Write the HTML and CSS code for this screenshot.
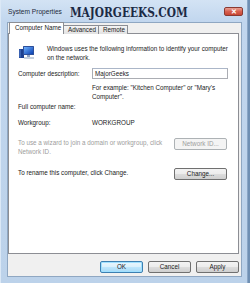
FILE: index.html
```html
<!DOCTYPE html>
<html>
<head>
<meta charset="utf-8">
<link rel="stylesheet" href="styles.css">
</head>
<body>
<div class="window">
  <div class="titlebar">
    <span class="title">System Properties</span>
    <span class="brand">MAJORGEEKS.COM</span>
    <span class="close">✕</span>
  </div>
  <div class="client">
    <div class="tabs">
      <div class="tab active">Computer Name</div>
      <div class="tab">Advanced</div>
      <div class="tab">Remote</div>
    </div>
    <div class="panel">
      <div class="intro">
        <svg class="pc" width="18" height="15" viewBox="0 0 18 15">
          <defs>
            <linearGradient id="scr" x1="0" y1="0" x2="1" y2="1">
              <stop offset="0" stop-color="#6fb2ff"/>
              <stop offset="1" stop-color="#0a3fb0"/>
            </linearGradient>
          </defs>
          <rect x="1" y="4" width="5" height="9" fill="#1b3f8f"/>
          <rect x="1.5" y="4.5" width="1" height="8" fill="#5a86d6"/>
          <rect x="5" y="1" width="11" height="9" rx="0.5" fill="#2d4f9a"/>
          <rect x="6" y="2" width="9" height="7" fill="url(#scr)"/>
          <rect x="9" y="10" width="3" height="2" fill="#8ea3c4"/>
          <rect x="6" y="12" width="10" height="2" fill="#c5d0de"/>
        </svg>
        <p>Windows uses the following information to identify your computer<br>on the network.</p>
      </div>
      <div class="row field">
        <span class="label">Computer description:</span>
        <span class="input">MajorGeeks</span>
      </div>
      <p class="hint">For example: "Kitchen Computer" or "Mary's<br>Computer".</p>
      <div class="row plain full">
        <span class="label">Full computer name:</span>
      </div>
      <div class="row plain work">
        <span class="label">Workgroup:</span>
        <span class="value">WORKGROUP</span>
      </div>
      <div class="action disabled">
        <p>To use a wizard to join a domain or workgroup, click<br>Network ID.</p>
        <span class="btn">Network ID...</span>
      </div>
      <div class="action rename">
        <p>To rename this computer, click Change.</p>
        <span class="btn">Change...</span>
      </div>
    </div>
    <div class="buttons">
      <span class="btn default">OK</span>
      <span class="btn">Cancel</span>
      <span class="btn">Apply</span>
    </div>
  </div>
</div>
</body>
</html>
```
FILE: styles.css
```css
html, body {
  margin: 0;
  padding: 0;
  background: #6f8fb3;
  width: 250px;
  height: 283px;
  overflow: hidden;
}
body {
  font-family: "Liberation Sans", Arial, sans-serif;
  font-size: 6.3px;
  color: #1a1a1a;
}
.window {
  width: 248px;
  height: 283px;
  box-sizing: border-box;
  background: linear-gradient(to bottom, #d3e3f4 0px, #c1d6ee 22px, #bcd2ea 100%);
  border-left: 1px solid #dbe8f6;
  border-right: 1px solid #8aa6c6;
  padding: 0 5px 6px 6px;
  display: flex;
  flex-direction: column;
}
.titlebar {
  height: 22px;
  display: flex;
  align-items: center;
  position: relative;
}
.title {
  font-size: 6.6px;
  color: #1e2a3a;
  margin-left: 1px;
  margin-top: 1px;
  white-space: nowrap;
}
.brand {
  font-family: "DejaVu Serif", "Liberation Serif", serif;
  font-weight: bold;
  font-size: 10.6px;
  color: #1b2a45;
  margin-left: 8px;
  margin-top: 1px;
  white-space: nowrap;
  transform: scaleY(1.3);
  transform-origin: center;
}
.close {
  position: absolute;
  right: -1px;
  top: 7px;
  width: 19px;
  height: 9px;
  box-sizing: border-box;
  border: 1px solid #8a3a32;
  border-radius: 2px;
  background: linear-gradient(to bottom, #e9a195 0%, #d7604f 50%, #c74634 100%);
  color: #fff;
  font-size: 7px;
  line-height: 7px;
  text-align: center;
  font-weight: bold;
}
.client {
  flex: 1;
  background: #f0f0f0;
  border: 1px solid #8fa7c2;
  padding: 0 1px 3px 0;
  display: flex;
  flex-direction: column;
}
.tabs {
  display: flex;
  height: 11px;
  align-items: flex-end;
  padding-left: 1px;
  position: relative;
  z-index: 1;
  margin-bottom: -1px;
}
.tab {
  height: 9px;
  box-sizing: border-box;
  border: 1px solid #8c8e94;
  border-bottom: none;
  border-left: none;
  background: linear-gradient(to bottom, #f4f4f4, #e2e2e2);
  padding: 0 0 0 4px;
  line-height: 8px;
  white-space: nowrap;
  color: #222;
}
.tab.active {
  height: 12px;
  background: #fff;
  border-left: 1px solid #8c8e94;
  padding-left: 5px;
  line-height: 10px;
  width: 55px;
}
.tab:nth-child(2) { width: 35px; }
.tab:nth-child(3) { width: 29px; }
.panel {
  height: 221px;
  box-sizing: border-box;
  background: #fff;
  border: 1px solid #8c8e94;
  padding: 10px 10px 0 9px;
  margin-right: 1px;
}
.intro {
  display: flex;
  align-items: flex-start;
}
.pc {
  flex: none;
  margin-top: 1px;
  margin-right: 11px;
}
p {
  margin: 0;
  line-height: 9px;
  white-space: nowrap;
}
.row {
  display: flex;
  align-items: center;
}
.label {
  width: 74px;
  flex: none;
  white-space: nowrap;
}
.field {
  margin-top: 6px;
}
.input {
  width: 139px;
  height: 11px;
  box-sizing: border-box;
  border: 1px solid #abadb3;
  border-top-color: #abb6c8;
  padding-left: 2px;
  line-height: 9px;
  background: #fff;
}
.hint {
  margin: 4px 0 0 74px;
}
.plain {
  height: 9px;
}
.full {
  margin-top: 1px;
}
.work {
  margin-top: 7px;
}
.action {
  display: flex;
  align-items: flex-start;
  justify-content: space-between;
}
.action.disabled {
  margin-top: 11px;
  color: #9d9d9d;
}
.action.rename {
  margin-top: 12px;
}
.btn {
  box-sizing: border-box;
  display: inline-block;
  width: 53px;
  height: 12px;
  border: 1px solid #707070;
  border-radius: 2px;
  background: linear-gradient(to bottom, #f3f3f3 0%, #ececec 50%, #dddddd 51%, #cfcfcf 100%);
  text-align: center;
  line-height: 10px;
  color: #1a1a1a;
  margin-right: 1px;
  white-space: nowrap;
}
.action.disabled .btn {
  border-color: #adb2b5;
  background: #f4f4f4;
  color: #9d9d9d;
}
.buttons {
  display: flex;
  justify-content: flex-end;
  gap: 5px;
  margin-top: 7px;
  padding-right: 1px;
}
.buttons .btn {
  width: 43px;
  margin: 0;
}
.btn.default {
  border-color: #3c7fb1;
  background: linear-gradient(to bottom, #eaf6fd 0%, #d9f0fc 50%, #bee6fd 51%, #a7d9f5 100%);
  box-shadow: inset 0 0 0 1px #9fe0ff;
}
```
